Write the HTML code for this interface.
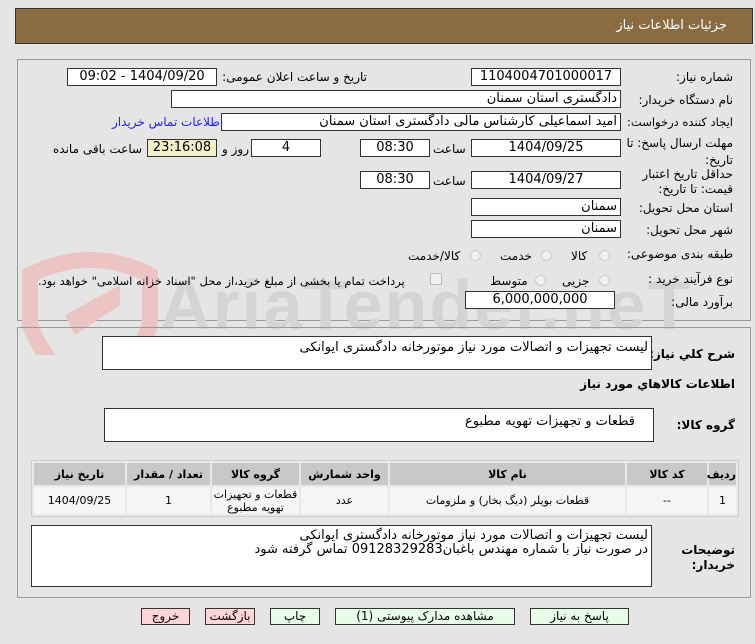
<!DOCTYPE html>
<html><head><meta charset="utf-8"><style>
body{margin:0;width:755px;height:644px;background:#e5e5e5;position:relative;overflow:hidden;font-family:"DejaVu Sans","Liberation Sans",sans-serif;font-size:12px;color:#000}
.a{position:absolute}
.box{position:absolute;background:#fff;border:1px solid #333;box-sizing:border-box;text-align:center;font-size:13px;line-height:15px;direction:rtl;white-space:nowrap;overflow:hidden}
.lbl{position:absolute;direction:rtl;white-space:nowrap;font-size:12px}
.panel{position:absolute;border:1px solid #999;box-sizing:border-box}
.rad{position:absolute;width:11px;height:11px;border-radius:50%;border:1px solid #ccc;background:#f0f0f0;box-sizing:border-box}
table{border-collapse:separate;border-spacing:2px;position:absolute;left:31px;top:460px;width:708px;background:#e8e8e8;border:1px solid #ccc;table-layout:fixed}
th{background:#c8c8c8;font-size:11px;height:22px;font-weight:bold;padding:0}
td{background:#f5f5f5;font-size:11px;text-align:center;height:27px;line-height:13px;padding:0;white-space:nowrap;overflow:hidden}
.btn{position:absolute;top:608px;height:17px;box-sizing:border-box;border:1px solid #333;font-size:12px;text-align:center;line-height:15px}
</style></head><body>
<div class="a" style="left:15px;top:8px;width:738px;height:36px;background:#8b6c42;border:1px solid #333;box-sizing:border-box"></div>
<div class="lbl" style="right:28px;top:18px;color:#fff;font-size:13px">جزئیات اطلاعات نیاز</div>

<div class="panel" style="left:17px;top:59px;width:734px;height:262px"></div>
<svg class="a" style="left:20px;top:245px" width="320" height="110"><path d="M10 30 Q70 0 130 30 L130 80 Q110 130 70 150 Q30 130 10 80 Z" fill="none" stroke="#ecc4c4" stroke-width="16"/><path d="M45 70 L100 40 L100 60 L55 90 Z" fill="#ecc4c4"/></svg>
<div class="a" style="left:160px;top:265px;font-size:70px;font-family:'Liberation Sans';font-weight:bold;color:#d4d4d4;letter-spacing:2px">AriaTender.neT</div>

<div class="lbl" style="right:22px;top:70px">شماره نیاز:</div>
<div class="box" style="left:471px;top:68px;width:150px;height:18px">1104004701000017</div>
<div class="lbl" style="right:388px;top:70px">تاریخ و ساعت اعلان عمومی:</div>
<div class="box" style="left:67px;top:68px;width:150px;height:18px">1404/09/20 - 09:02</div>

<div class="lbl" style="right:22px;top:93px">نام دستگاه خریدار:</div>
<div class="box" style="left:171px;top:90px;width:450px;height:18px;text-align:right;padding-right:3px">دادگستری استان سمنان</div>

<div class="lbl" style="right:22px;top:115px;font-size:11.5px">ایجاد کننده درخواست:</div>
<div class="box" style="left:221px;top:113px;width:400px;height:18px;text-align:right;padding-right:3px">امید اسماعیلی کارشناس مالی دادگستری استان سمنان</div>
<div class="lbl" style="left:112px;top:115px;color:#2222dd">اطلاعات تماس خریدار</div>

<div class="lbl" style="right:22px;top:135px;line-height:17px">مهلت ارسال پاسخ: تا<br>تاریخ:</div>
<div class="box" style="left:471px;top:139px;width:150px;height:18px">1404/09/25</div>
<div class="lbl" style="left:433px;top:142px">ساعت</div>
<div class="box" style="left:360px;top:139px;width:70px;height:18px">08:30</div>
<div class="box" style="left:251px;top:139px;width:70px;height:18px">4</div>
<div class="lbl" style="left:222px;top:142px">روز و</div>
<div class="box" style="left:147px;top:139px;width:70px;height:18px;background:#f3efc6">23:16:08</div>
<div class="lbl" style="left:53px;top:142px">ساعت باقی مانده</div>

<div class="lbl" style="right:22px;top:167px;line-height:15px">حداقل تاریخ اعتبار<br>قیمت: تا تاریخ:</div>
<div class="box" style="left:471px;top:171px;width:150px;height:18px">1404/09/27</div>
<div class="lbl" style="left:433px;top:174px">ساعت</div>
<div class="box" style="left:360px;top:171px;width:70px;height:18px">08:30</div>

<div class="lbl" style="right:22px;top:201px">استان محل تحویل:</div>
<div class="box" style="left:471px;top:198px;width:150px;height:18px;text-align:right;padding-right:3px">سمنان</div>
<div class="lbl" style="right:22px;top:223px">شهر محل تحویل:</div>
<div class="box" style="left:471px;top:220px;width:150px;height:18px;text-align:right;padding-right:3px">سمنان</div>

<div class="lbl" style="right:22px;top:247px">طبقه بندی موضوعی:</div>
<div class="rad" style="left:599px;top:250px"></div><div class="lbl" style="left:571px;top:249px">کالا</div>
<div class="rad" style="left:541px;top:250px"></div><div class="lbl" style="left:500px;top:249px">خدمت</div>
<div class="rad" style="left:470px;top:250px"></div><div class="lbl" style="left:408px;top:249px">کالا/خدمت</div>

<div class="lbl" style="right:22px;top:272px">نوع فرآیند خرید :</div>
<div class="rad" style="left:599px;top:275px"></div><div class="lbl" style="left:562px;top:274px">جزیی</div>
<div class="rad" style="left:535px;top:275px"></div><div class="lbl" style="left:490px;top:274px">متوسط</div>
<div class="a" style="left:430px;top:273px;width:12px;height:12px;border:1px solid #bbb;background:#f0f0f0;box-sizing:border-box"></div>
<div class="lbl" style="left:38px;top:274px;font-size:11.5px">پرداخت تمام یا بخشی از مبلغ خرید،از محل "اسناد خزانه اسلامی" خواهد بود.</div>

<div class="lbl" style="right:22px;top:295px">برآورد مالی:</div>
<div class="box" style="left:465px;top:291px;width:150px;height:18px">6,000,000,000</div>

<div class="panel" style="left:17px;top:327px;width:734px;height:271px"></div>
<div class="lbl" style="right:20px;top:347px;font-weight:bold">شرح کلي نیاز:</div>
<div class="box" style="left:102px;top:336px;width:550px;height:34px;text-align:right;padding:3px 3px 0 0">لیست تجهیزات و اتصالات مورد نیاز موتورخانه دادگستری ایوانکی</div>
<div class="lbl" style="right:20px;top:377px;font-weight:bold">اطلاعات کالاهاي مورد نیاز</div>
<div class="lbl" style="right:20px;top:418px;font-weight:bold">گروه کالا:</div>
<div class="box" style="left:104px;top:408px;width:550px;height:34px;text-align:right;padding:5px 18px 0 0">قطعات و تجهیزات تهویه مطبوع</div>

<table dir="rtl">
<tr><th style="width:27px">ردیف</th><th style="width:80px">کد کالا</th><th style="width:235px">نام کالا</th><th style="width:87px">واحد شمارش</th><th style="width:87px">گروه کالا</th><th style="width:83px">تعداد / مقدار</th><th>تاریخ نیاز</th></tr>
<tr><td>1</td><td>--</td><td>قطعات بویلر (دیگ بخار) و ملزومات</td><td>عدد</td><td>قطعات و تجهیزات<br>تهویه مطبوع</td><td>1</td><td>1404/09/25</td></tr>
</table>

<div class="lbl" style="right:20px;top:543px;font-weight:bold;line-height:15px">توضیحات<br>خریدار:</div>
<div class="box" style="left:31px;top:525px;width:621px;height:62px;text-align:right;padding:3px 3px 0 0;line-height:14px">لیست تجهیزات و اتصالات مورد نیاز موتورخانه دادگستری ایوانکی<br>در صورت نیاز با شماره مهندس باغبان09128329283 تماس گرفته شود</div>

<div class="btn" style="left:141px;width:49px;background:#ffd6d6">خروج</div>
<div class="btn" style="left:205px;width:50px;background:#ffd6d6">بازگشت</div>
<div class="btn" style="left:270px;width:50px;background:#e8fde8">چاپ</div>
<div class="btn" style="left:335px;width:180px;background:#e8fde8">مشاهده مدارک پیوستی (1)</div>
<div class="btn" style="left:530px;width:99px;background:#e8fde8">پاسخ به نیاز</div>
</body></html>
